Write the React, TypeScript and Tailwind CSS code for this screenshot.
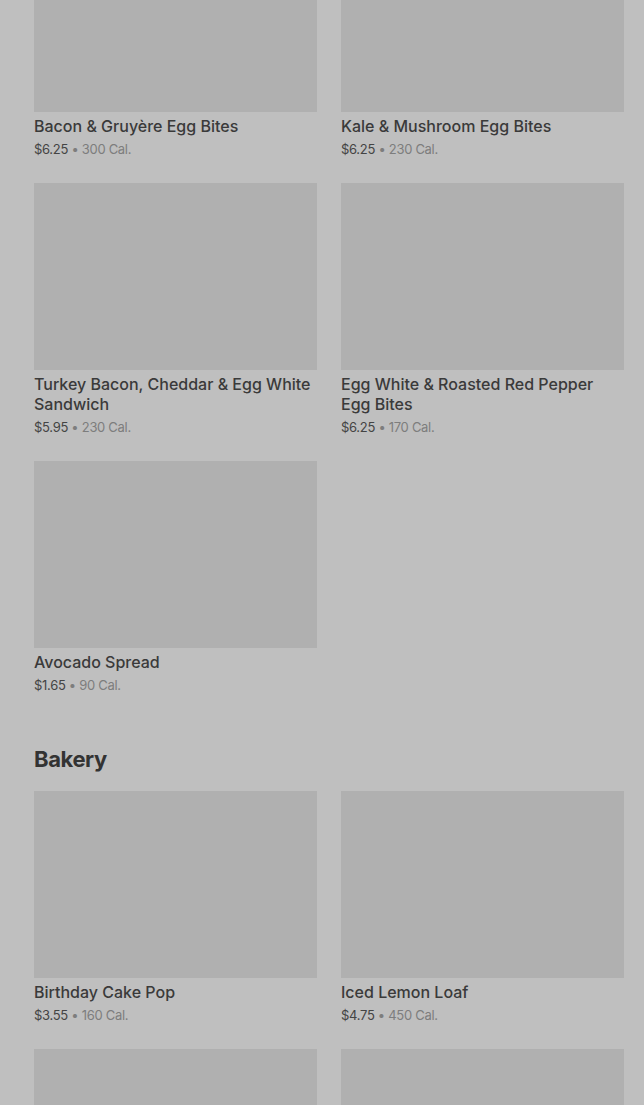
type Item = { name: string; price: string; cal: string };

const food: Item[] = [
  { name: "Bacon & Gruyère Egg Bites", price: "$6.25", cal: "300 Cal." },
  { name: "Kale & Mushroom Egg Bites", price: "$6.25", cal: "230 Cal." },
  { name: "Turkey Bacon, Cheddar & Egg White Sandwich", price: "$5.95", cal: "230 Cal." },
  { name: "Egg White & Roasted Red Pepper Egg Bites", price: "$6.25", cal: "170 Cal." },
  { name: "Avocado Spread", price: "$1.65", cal: "90 Cal." },
];

const bakery: Item[] = [
  { name: "Birthday Cake Pop", price: "$3.55", cal: "160 Cal." },
  { name: "Iced Lemon Loaf", price: "$4.75", cal: "450 Cal." },
];

function Card({ item }: { item: Item }) {
  return (
    <div className="flex flex-col">
      <div className="h-[187px] w-full bg-[#b0b0b0]" />
      <p className="mt-[4px] text-[16px] leading-[20px] font-medium text-[#3a3a3a]">{item.name}</p>
      <p className="mt-[4px] text-[13px] leading-[18px] tracking-[-0.3px]">
        <span className="text-[#444]">{item.price}</span>
        <span className="text-[#7d7d7d]"> • {item.cal}</span>
      </p>
    </div>
  );
}

export default function App() {
  return (
    <div
      className="h-[1105px] bg-[#bfbfbf] pl-[34px] pr-[20px] overflow-hidden"
      style={{ fontFamily: "Inter, 'Noto Sans', sans-serif" }}
    >
      <div className="-mt-[75px] grid grid-cols-2 gap-x-[24px] gap-y-[25px]">
        {food.map((item) => (
          <Card key={item.name} item={item} />
        ))}
      </div>
      <h2 className="mt-[51px] text-[22px] leading-[28px] font-bold text-[#333] tracking-[-0.4px]">Bakery</h2>
      <div className="mt-[18px] grid grid-cols-2 gap-x-[24px] gap-y-[25px]">
        {bakery.map((item) => (
          <Card key={item.name} item={item} />
        ))}
        {/* next row, only the top of the pictures is in view */}
        <div className="h-[187px] bg-[#b0b0b0]" />
        <div className="h-[187px] bg-[#b0b0b0]" />
      </div>
    </div>
  );
}
